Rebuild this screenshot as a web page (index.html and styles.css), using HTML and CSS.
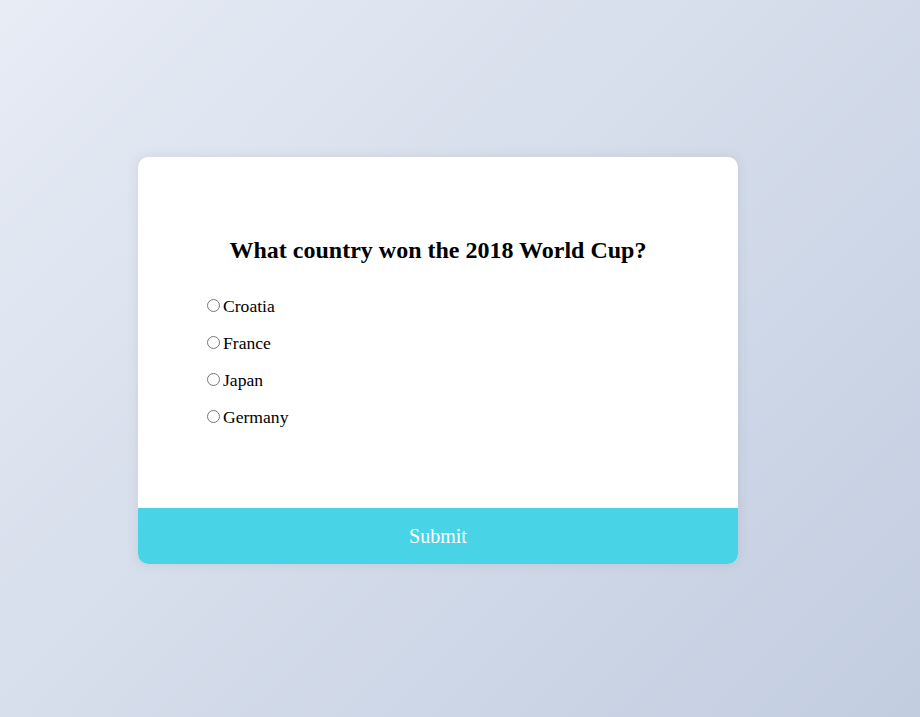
FILE: index.html
```html
<!DOCTYPE html>
<html>
<head>
<meta charset="utf-8">
<link rel="stylesheet" href="styles.css">
</head>
<body>
<div class="quiz-container">
  <div class="quiz-header">
    <h2 class="question">What country won the 2018 World Cup?</h2>
    <ul class="answers">
      <li><input type="radio" name="answer" id="a"><label for="a">Croatia</label></li>
      <li><input type="radio" name="answer" id="b"><label for="b">France</label></li>
      <li><input type="radio" name="answer" id="c"><label for="c">Japan</label></li>
      <li><input type="radio" name="answer" id="d"><label for="d">Germany</label></li>
    </ul>
  </div>
  <button class="submit">Submit</button>
</div>
</body>
</html>
```
FILE: styles.css
```css
html, body {
  height: 100%;
}
body {
  margin: 0;
  box-sizing: border-box;
  padding-right: 44px;
  padding-top: 3px;
  display: flex;
  align-items: center;
  justify-content: center;
  font-family: "Liberation Serif", "Times New Roman", serif;
  background-color: #c4cfe0;
  background-image: linear-gradient(135deg, #e7ecf5 0%, #c2cde0 100%);
}
.quiz-container {
  width: 600px;
  background: #fff;
  border-radius: 10px;
  overflow: hidden;
  box-shadow: 0 0 10px 2px rgba(100, 100, 100, 0.1);
}
.quiz-header {
  padding: 64px;
}
.question {
  margin: 0;
  padding: 16px;
  text-align: center;
  font-size: 24px;
  color: #000;
}
.answers {
  list-style: none;
  padding: 0;
  margin: 16px 0;
}
.answers li {
  font-size: 17.6px;
  line-height: 21px;
  margin: 16px 0;
}
.answers input {
  margin: 3px 3px 0 5px;
}
.submit {
  display: block;
  width: 100%;
  border: none;
  background-color: #48d4e6;
  color: #fff;
  font-family: inherit;
  font-size: 20px;
  line-height: 24px;
  padding: 16px;
  cursor: pointer;
}
```
